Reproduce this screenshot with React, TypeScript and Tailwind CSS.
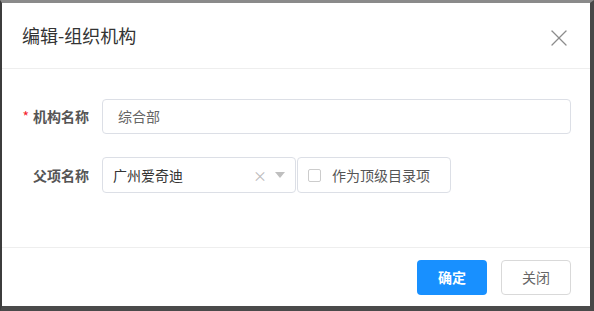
import { X } from 'lucide-react';

const cjk = { fontFamily: '"Noto Sans CJK SC", "Noto Sans", sans-serif' };

function Label({ text, required }: { text: string; required?: boolean }) {
    return (
        <div className="flex w-[87px] shrink-0 items-center justify-end text-[14px] font-bold text-[#555]">
            {required && <span className="mr-[4px] text-[#f5222d] font-normal">*</span>}
            {text}
        </div>
    );
}

export default function App() {
    return (
        <div
            className="flex h-[311px] w-[594px] flex-col border-t-[3px] border-l-2 border-r-4 border-b-[5px] border-t-[#8a8a8a] border-l-[#3c3c3c] border-r-[#474747] border-b-[#4a4a4a] bg-white"
            style={cjk}
        >
            {/* Header */}
            <div className="flex h-[66px] shrink-0 items-center justify-between border-b border-[#eeeeee] pl-[20px] pr-[17px]">
                <span className="text-[18px] text-[#333]">编辑-组织机构</span>
                <X className="mt-[4px] h-[28px] w-[28px] text-[#8c8c8c]" strokeWidth={1.1} />
            </div>

            {/* Body */}
            <div className="flex flex-1 flex-col gap-[23px] pt-[30px] pr-[19px]">
                <div className="flex items-center">
                    <Label text="机构名称" required />
                    <div className="ml-[13px] flex h-[35px] flex-1 items-center rounded-[4px] border border-[#dcdfe6] pl-[15px] text-[14px] text-[#666]">
                        综合部
                    </div>
                </div>
                <div className="flex items-center">
                    <Label text="父项名称" />
                    <div className="ml-[13px] flex h-[36px] w-[194px] items-center rounded-[4px] border border-[#dcdfe6] pl-[10px] pr-[10px] text-[14px] text-[#333]">
                        <span className="flex-1">广州爱奇迪</span>
                        <span className="mr-[8px] text-[14px] leading-none text-[#bbb]">×</span>
                        <svg width="10" height="6" viewBox="0 0 10 6">
                            <path d="M0 0h10L5 6z" fill="#bfbfbf" />
                        </svg>
                    </div>
                    <div className="ml-[1px] flex h-[36px] w-[154px] items-center rounded-[4px] border border-[#dcdfe6] pl-[10px] text-[14px] text-[#555]">
                        <span className="mr-[11px] h-[13px] w-[13px] rounded-[2px] border border-[#ccc]" />
                        作为顶级目录项
                    </div>
                </div>
            </div>

            {/* Footer */}
            <div className="flex h-[59px] shrink-0 items-start justify-end gap-[14px] border-t border-[#eeeeee] pt-[12px] pr-[19px]">
                <button className="flex h-[35px] w-[70px] items-center justify-center rounded-[4px] bg-[#1890ff] text-[14px] font-bold text-white">
                    确定
                </button>
                <button className="flex h-[35px] w-[70px] items-center justify-center rounded-[4px] border border-[#d9d9d9] bg-white text-[14px] text-[#666]">
                    关闭
                </button>
            </div>
        </div>
    );
}
